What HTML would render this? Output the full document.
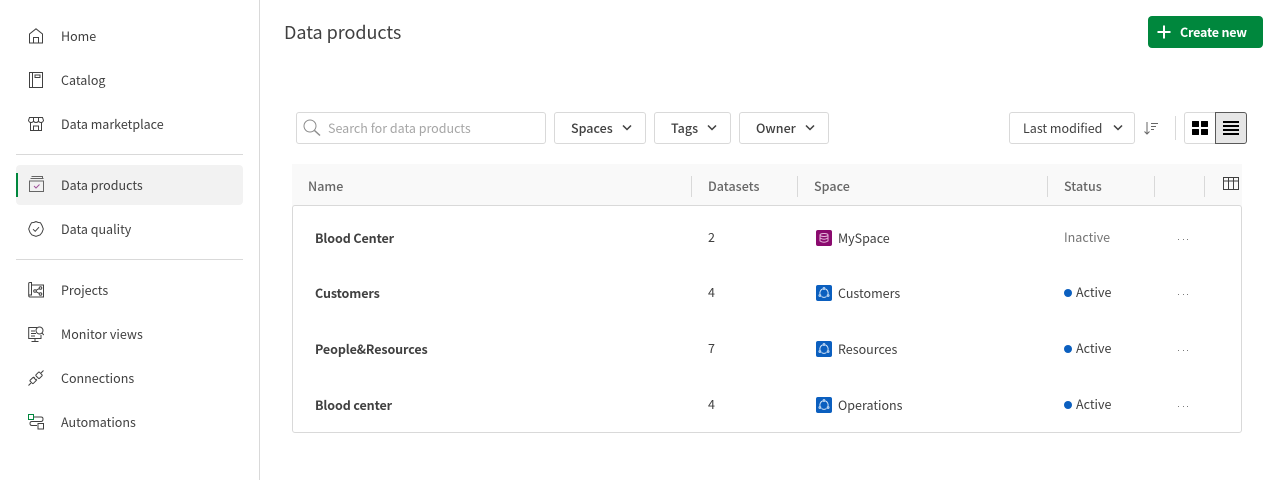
<!DOCTYPE html>
<html>
<head>
<meta charset="utf-8">
<style>
html,body{margin:0;padding:0;background:#fff}
body{width:1273px;height:480px;position:relative;overflow:hidden;font-family:"Noto Sans CJK SC","Liberation Sans",sans-serif;color:#404040;font-size:12.5px}
.a{position:absolute}
.t{position:absolute;line-height:20px;white-space:nowrap}
svg{position:absolute;fill:none;stroke:#404040;stroke-width:1}
.btn{position:absolute;box-sizing:border-box;border:1px solid #d9d9d9;border-radius:3px;background:#fff;height:32px;top:112px}
.hd{color:#666;font-weight:500;letter-spacing:.03px}
.b{font-weight:700;color:#404040;letter-spacing:-.1px}
.sep{position:absolute;width:1px;height:21px;top:176px;background:#d9d9d9}
.sq{position:absolute;width:16px;height:16px;border-radius:2px;left:816px}
.dot{position:absolute;width:8px;height:8px;border-radius:50%;background:#0b5fbf;left:1064px}
.dots{position:absolute;left:1177px;fill:#7a7a7a;stroke:none}
</style>
</head>
<body>
<div class="a" style="left:259px;top:0;width:1px;height:480px;background:#d9d9d9"></div>
<div class="a" style="left:16px;top:154px;width:227px;height:1px;background:#d9d9d9"></div>
<div class="a" style="left:16px;top:259px;width:227px;height:1px;background:#d9d9d9"></div>
<div class="a" style="left:16px;top:165px;width:227px;height:40px;background:#f2f2f2;border-radius:4px"></div>
<div class="a" style="left:16px;top:173px;width:2px;height:24px;background:#00873d"></div>

<svg style="left:28px;top:28px" width="16" height="16" viewBox="0 0 16 16"><path d="M1.500 15V6L8 .8 14.500 6V15Z"/><path d="M5.500 15V9.500H10.500V15"/></svg>
<svg style="left:28px;top:72px" width="16" height="16" viewBox="0 0 16 16"><rect x="1.500" y=".5" width="13" height="15"/><path d="M4.500 .5V15.500"/><rect x="7" y="3" width="5" height="2.500"/></svg>
<svg style="left:28px;top:116px" width="16" height="16" viewBox="0 0 16 16"><path d="M1.500 1.500H14.500L15.500 4.500Q14.800 6.500 13 6.500 11 6.500 10.500 5 9.800 6.500 8 6.500 6.200 6.500 5.500 5 5 6.500 3 6.500 1.200 6.500 .5 4.500Z"/><path d="M2.500 6.500V14.500H13.500V6.500M5.500 14.500V10H10.500V14.500M5.500 1.500V5M10.500 1.500V5"/></svg>
<svg style="left:29px;top:176px;stroke:#666" width="16" height="16" viewBox="0 0 16 16"><path d="M2.500 .5H13.500V2.500M1.500 2.500H14.500"/><rect x=".5" y="5" width="14" height="10.500"/><path d="M5 10L7 12 10.500 8.500" stroke="#a0529a"/></svg>
<svg style="left:28px;top:221px" width="16" height="16" viewBox="0 0 16 16"><path d="M8 .6L10 1.400 12.500 1.800 14 4.500 15.300 8 14 11.500 12 14 8 15.400 4 14 2 11.500.7 8 2 4.500 3.500 1.800 6 1.400Z"/><path d="M5 8.200L7.200 10.300 11 6.200"/></svg>

<svg style="left:28px;top:282px" width="16" height="16" viewBox="0 0 16 16"><path d="M2 .5H3.500V13H.7V1.500Q.7 .5 2 .5ZM3.500 3H15.500V15H2Q.7 15 .7 13.500"/><circle cx="7" cy="9" r="1.300"/><circle cx="12.500" cy="6" r="1.300"/><circle cx="12.500" cy="12" r="1.300"/><path d="M8 8.300L11.300 6.600M8 9.700L11.300 11.400"/></svg>
<svg style="left:28px;top:326px" width="16" height="16" viewBox="0 0 16 16"><path d="M9 1.500H.7V12.500H13V9M7 12.500V15.500M3.500 15.500H10.500M3 5H7M3 7.500H8M3 10H7"/><circle cx="11.500" cy="4.500" r="3.500"/><path d="M14 7L15.800 9"/></svg>
<svg style="left:28px;top:370px" width="16" height="16" viewBox="0 0 16 16"><path d="M.5 15.500L3 13M13 3L15.500 .5M6.800 8.200L5.500 6.900M9 10.300L7.700 9"/><rect x="2.500" y="8.300" width="5" height="4.500" rx=".8" transform="rotate(-45 5 10.500)"/><rect x="8.500" y="2.800" width="5" height="5" rx=".8" transform="rotate(-45 11 5.300)"/></svg>
<svg style="left:28px;top:414px" width="16" height="16" viewBox="0 0 16 16"><rect x=".5" y=".5" width="5" height="5" stroke="#00873d"/><path d="M6 3H13Q15 3 15 5 15 7.500 13 7.500H4Q2 7.500 2 9.500 2 11.500 4 11.500H9"/><rect x="10" y="9.500" width="5.500" height="5.500"/></svg>

<div class="t" style="left:61px;top:26px">Home</div>
<div class="t" style="left:61px;top:70px">Catalog</div>
<div class="t" style="left:61px;top:114px">Data marketplace</div>
<div class="t" style="left:61px;top:175px">Data products</div>
<div class="t" style="left:61px;top:219px">Data quality</div>
<div class="t" style="left:61px;top:280px">Projects</div>
<div class="t" style="left:61px;top:324px;letter-spacing:.04px">Monitor views</div>
<div class="t" style="left:61px;top:368px">Connections</div>
<div class="t" style="left:61px;top:412px">Automations</div>

<div class="t" style="left:284px;top:20px;font-size:18px;line-height:24px;letter-spacing:-.03px">Data products</div>

<div class="a" style="left:1148px;top:16px;width:115px;height:32px;background:#00873d;border-radius:4px"></div>
<svg style="left:1157px;top:25px;stroke:#fff;stroke-width:2" width="14" height="14" viewBox="0 0 14 14"><path d="M7 .5V13.500M.5 7H13.500"/></svg>
<div class="t" style="left:1180px;top:22px;color:#fff;font-weight:700;letter-spacing:-.2px">Create new</div>

<div class="btn" style="left:296px;width:250px"></div>
<svg style="left:303px;top:119px;stroke:#8c8c8c" width="18" height="18" viewBox="0 0 18 18"><circle cx="7" cy="7" r="6"/><path d="M11.500 11.500L17 16.500" stroke-width="1.500"/></svg>
<div class="t" style="left:328px;top:118px;color:#a6a6a6">Search for data products</div>

<div class="btn" style="left:554px;width:92px"></div>
<div class="t" style="left:571px;top:118px;font-weight:500">Spaces</div>
<svg style="left:622px;top:124px;stroke-width:1.500" width="10" height="8" viewBox="0 0 10 8"><path d="M1 1.500L5 5.500 9 1.500"/></svg>
<div class="btn" style="left:654px;width:77px"></div>
<div class="t" style="left:671px;top:118px;font-weight:500">Tags</div>
<svg style="left:707px;top:124px;stroke-width:1.500" width="10" height="8" viewBox="0 0 10 8"><path d="M1 1.500L5 5.500 9 1.500"/></svg>
<div class="btn" style="left:739px;width:90px"></div>
<div class="t" style="left:756px;top:118px;font-weight:500">Owner</div>
<svg style="left:805px;top:124px;stroke-width:1.500" width="10" height="8" viewBox="0 0 10 8"><path d="M1 1.500L5 5.500 9 1.500"/></svg>

<div class="btn" style="left:1009px;width:126px"></div>
<div class="t" style="left:1023px;top:118px">Last modified</div>
<svg style="left:1112px;top:124px;stroke-width:1.500" width="12" height="8" viewBox="0 0 12 8"><path d="M2 1.500L6 5.500 10 1.500"/></svg>
<svg style="left:1143px;top:121px;stroke:#666" width="16" height="15" viewBox="0 0 16 15"><path d="M4 1V13M1.500 10.500L4 13 6.500 10.500M8 2.500H15M8 5.500H13M8 8.500H11"/></svg>
<div class="a" style="left:1175px;top:116px;width:1px;height:24px;background:#d9d9d9"></div>

<div class="btn" style="left:1184px;width:32px;border-radius:3px 0 0 3px;border-right:0"></div>
<div class="btn" style="left:1215px;width:32px;background:#e6e6e6;border-color:#595959;border-radius:0 3px 3px 0"></div>
<svg style="left:1192px;top:121px;fill:#000;stroke:none" width="16" height="14" viewBox="0 0 16 14"><rect width="7" height="6" rx=".5"/><rect x="9" width="7" height="6" rx=".5"/><rect y="8" width="7" height="6" rx=".5"/><rect x="9" y="8" width="7" height="6" rx=".5"/></svg>
<svg style="left:1223px;top:121px;fill:#000;stroke:none" width="16" height="14" viewBox="0 0 16 14"><rect width="16" height="2"/><rect y="4" width="16" height="2"/><rect y="8" width="16" height="2"/><rect y="12" width="16" height="2"/></svg>

<div class="a" style="left:292px;top:164px;width:950px;height:42px;background:#f9f9f9"></div>
<div class="a" style="left:292px;top:205px;box-sizing:border-box;width:950px;height:228px;border:1px solid #d9d9d9;border-radius:3px;background:#fff"></div>
<div class="t hd" style="left:308px;top:176px">Name</div>
<div class="t hd" style="left:708px;top:176px">Datasets</div>
<div class="t hd" style="left:814px;top:176px">Space</div>
<div class="t hd" style="left:1064px;top:176px">Status</div>
<div class="sep" style="left:691px"></div>
<div class="sep" style="left:797px"></div>
<div class="sep" style="left:1047px"></div>
<div class="sep" style="left:1154px"></div>
<div class="sep" style="left:1204px"></div>
<svg style="left:1223px;top:177px" width="16" height="13" viewBox="0 0 16 13"><path d="M.5 .5H15.500V12.500H.5ZM.5 4H15.500M5.500 .5V12.500M10.500 .5V12.500"/></svg>

<div class="t b" style="left:315px;top:228px">Blood Center</div>
<div class="t b" style="left:315px;top:283px">Customers</div>
<div class="t b" style="left:315px;top:339px">People&amp;Resources</div>
<div class="t b" style="left:315px;top:395px">Blood center</div>

<div class="t" style="left:708px;top:227px">2</div>
<div class="t" style="left:708px;top:282px">4</div>
<div class="t" style="left:708px;top:338px">7</div>
<div class="t" style="left:708px;top:394px">4</div>

<div class="sq" style="top:230px;background:#8a0a6e"></div>
<svg style="left:819px;top:233px;stroke:#e6b8dc" width="10" height="10" viewBox="0 0 10 10"><ellipse cx="5" cy="2" rx="4" ry="1.500"/><path d="M1 2V8Q5 10.500 9 8V2M1 5Q5 7.500 9 5"/></svg>
<div class="sq" style="top:285px;background:#0b5fbf"></div>
<svg style="left:818px;top:287px;stroke:#d6e6f8" width="12" height="12" viewBox="0 0 12 12"><path d="M7.500 2A4.300 4.300 0 0 1 10 7M8.500 9.500A4.300 4.300 0 0 1 3.500 9.500M2 7A4.300 4.300 0 0 1 4.500 2"/><circle cx="6" cy="1.500" r=".9"/><circle cx="1.900" cy="8.500" r=".9"/><circle cx="10.100" cy="8.500" r=".9"/></svg>
<div class="sq" style="top:341px;background:#0b5fbf"></div>
<svg style="left:818px;top:343px;stroke:#d6e6f8" width="12" height="12" viewBox="0 0 12 12"><path d="M7.500 2A4.300 4.300 0 0 1 10 7M8.500 9.500A4.300 4.300 0 0 1 3.500 9.500M2 7A4.300 4.300 0 0 1 4.500 2"/><circle cx="6" cy="1.500" r=".9"/><circle cx="1.900" cy="8.500" r=".9"/><circle cx="10.100" cy="8.500" r=".9"/></svg>
<div class="sq" style="top:397px;background:#0b5fbf"></div>
<svg style="left:818px;top:399px;stroke:#d6e6f8" width="12" height="12" viewBox="0 0 12 12"><path d="M7.500 2A4.300 4.300 0 0 1 10 7M8.500 9.500A4.300 4.300 0 0 1 3.500 9.500M2 7A4.300 4.300 0 0 1 4.500 2"/><circle cx="6" cy="1.500" r=".9"/><circle cx="1.900" cy="8.500" r=".9"/><circle cx="10.100" cy="8.500" r=".9"/></svg>

<div class="t" style="left:838px;top:228px">MySpace</div>
<div class="t" style="left:838px;top:283px">Customers</div>
<div class="t" style="left:838px;top:339px">Resources</div>
<div class="t" style="left:838px;top:395px">Operations</div>

<div class="t" style="left:1064px;top:227px;color:#757575">Inactive</div>
<div class="dot" style="top:289px"></div>
<div class="t" style="left:1076px;top:282px">Active</div>
<div class="dot" style="top:345px"></div>
<div class="t" style="left:1076px;top:338px">Active</div>
<div class="dot" style="top:401px"></div>
<div class="t" style="left:1076px;top:394px">Active</div>

<svg class="dots" style="top:239px" width="12" height="1" viewBox="0 0 12 1"><rect x="1" width="1" height="1"/><rect x="6" width="1" height="1"/><rect x="10" width="1" height="1"/></svg>
<svg class="dots" style="top:294px" width="12" height="1" viewBox="0 0 12 1"><rect x="1" width="1" height="1"/><rect x="6" width="1" height="1"/><rect x="10" width="1" height="1"/></svg>
<svg class="dots" style="top:350px" width="12" height="1" viewBox="0 0 12 1"><rect x="1" width="1" height="1"/><rect x="6" width="1" height="1"/><rect x="10" width="1" height="1"/></svg>
<svg class="dots" style="top:406px" width="12" height="1" viewBox="0 0 12 1"><rect x="1" width="1" height="1"/><rect x="6" width="1" height="1"/><rect x="10" width="1" height="1"/></svg>
</body>
</html>
